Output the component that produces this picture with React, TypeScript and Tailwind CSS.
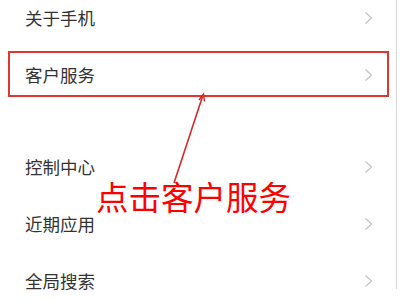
import React from "react";

const Chevron = () => (
  <svg width="10" height="14" viewBox="0 0 10 14" className="shrink-0">
    <path d="M1.5 1.5 L7.5 7 L1.5 12.5" fill="none" stroke="#c6c6c6" strokeWidth="1.3" />
  </svg>
);

const Row = ({ label }: { label: string }) => (
  <div className="h-[57px] flex items-center justify-between pl-[25px] pr-[22px]">
    <span className="text-[17.5px] leading-none text-[#333333]">{label}</span>
    <Chevron />
  </div>
);

export default function App() {
  return (
    <div
      className="relative w-[400px] h-[300px] overflow-hidden bg-white"
      style={{ fontFamily: '"Noto Sans CJK SC", "Noto Sans", sans-serif' }}
    >
      <div className="w-[397px] h-[300px] border-r border-[#d8d8d8]">
        <div className="-mt-[11px]">
          <Row label="关于手机" />
          <Row label="客户服务" />
          <div className="h-[35px]" />
          <Row label="控制中心" />
          <Row label="近期应用" />
          <Row label="全局搜索" />
        </div>
      </div>

      {/* annotation box */}
      <div className="absolute left-[8px] top-[51px] w-[381px] h-[46px] border-2 border-[#dd3730]" />

      {/* arrow */}
      <svg className="absolute left-0 top-0" width="400" height="300" viewBox="0 0 400 300">
        <line x1="174" y1="183" x2="203" y2="95" stroke="#d42a27" strokeWidth="1.6" />
        <path d="M199 100 L203.5 94 L204.5 101.5" fill="none" stroke="#d42a27" strokeWidth="1.4" />
      </svg>

      {/* red caption */}
      <div className="absolute left-[96px] top-[180px] text-[32.5px] leading-[32px] text-[#ff0000] whitespace-nowrap">
        点击客户服务
      </div>
    </div>
  );
}
